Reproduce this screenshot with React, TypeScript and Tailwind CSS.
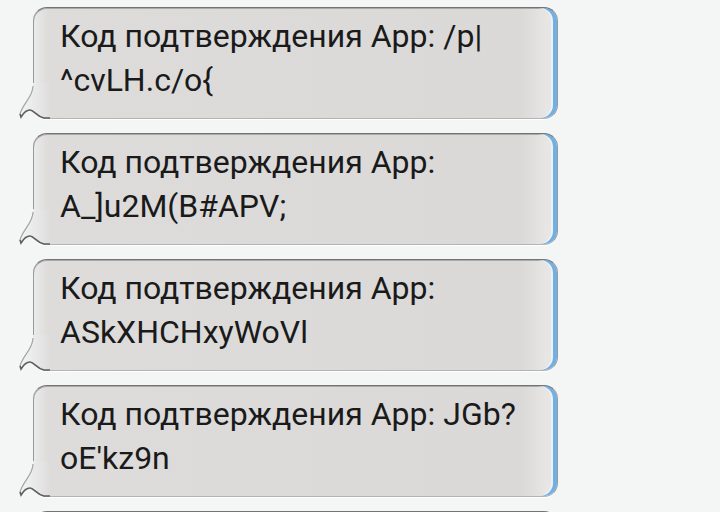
import React from 'react';

const messages: [string, string][] = [
  ['Код подтверждения App: /p|', '^cvLH.c/o{'],
  ['Код подтверждения App:', 'A_]u2M(B#APV;'],
  ['Код подтверждения App:', 'ASkXHCHxyWoVl'],
  ['Код подтверждения App: JGb?', "oE'kz9n"],
  ['', ''],
];

function Tail() {
  return (
    <svg
      className="absolute left-[-18px] bottom-[-1px]"
      width="34"
      height="36"
      viewBox="0 0 34 36"
    >
      <defs>
        <linearGradient id="tailFill" x1="0" y1="0" x2="1" y2="0">
          <stop offset="0" stopColor="#f4f4f4" />
          <stop offset="0.6" stopColor="#e8e7e7" />
          <stop offset="1" stopColor="#dedddc" />
        </linearGradient>
      </defs>
      <path
        d="M17 0 L17 3 C17 14 7 20 4 31 L5 34 C8 29 11 27 14 27 C18 27 20 33 28 35 L34 35 L34 0 Z"
        fill="url(#tailFill)"
      />
      <path
        d="M17 3 C17 14 7 20 4 31"
        fill="none"
        stroke="#a3a3a3"
        strokeWidth="1.2"
      />
      <path
        d="M4 31 L5 34 C8 29 11 27 14 27 C18 27 20 33 28 35 L34 35"
        fill="none"
        stroke="#5e5e5e"
        strokeWidth="1.6"
      />
    </svg>
  );
}

function Bubble({ lines }: { lines: [string, string] }) {
  return (
    <div className="relative h-[112px] w-[525px] shrink-0 rounded-[14px] border border-[#9a9a9a] border-t-[#747474] border-b-[#b4b4b4] bg-[linear-gradient(to_right,#ebeaea_0px,#dddcdb_14px,#dad9d8_93%,#e7e6e5_98%)] shadow-[inset_-4px_0_0_#6eb0e8,inset_-6px_0_0_#f0f0f0,inset_0_1px_0_#a9a9a9,0_1px_0_#ffffff]">
      <Tail />
      <div className="pl-[26px] pt-[6px] text-[32px] leading-[44px] text-[#1a1a1a] font-['Roboto',sans-serif]">
        <div className="whitespace-nowrap">{lines[0]}</div>
        <div className="whitespace-nowrap">{lines[1]}</div>
      </div>
    </div>
  );
}

export default function App() {
  return (
    <div className="h-[512px] w-[720px] overflow-hidden bg-[#f4f6f6]">
      <div className="flex flex-col gap-[14px] pl-[33px] pt-[7px]">
        {messages.map((m, i) => (
          <Bubble key={i} lines={m} />
        ))}
      </div>
    </div>
  );
}
